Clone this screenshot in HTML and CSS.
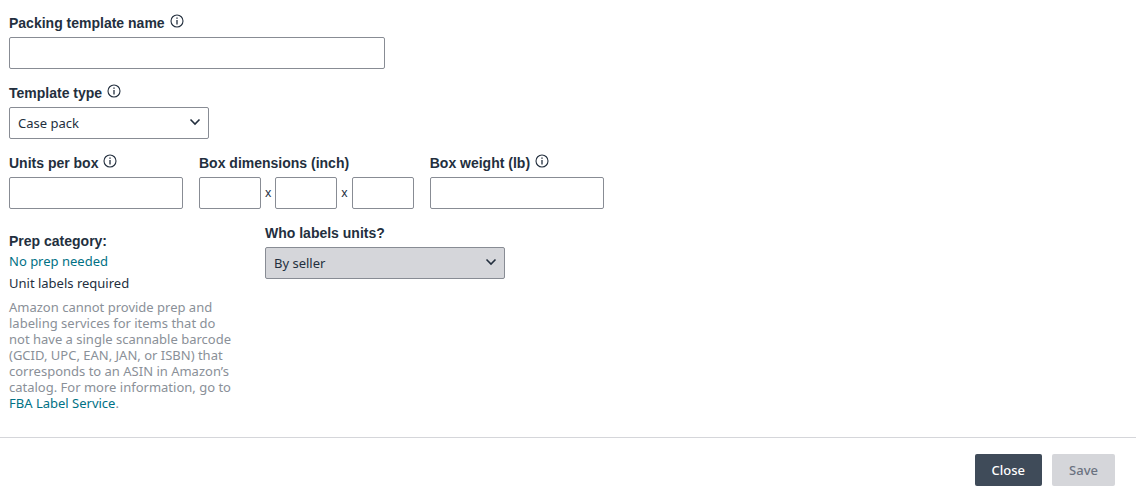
FILE: index.html
```html
<!DOCTYPE html>
<html lang="en">
<head>
  <meta charset="UTF-8">
  <meta name="viewport" content="width=device-width, initial-scale=1.0">
  <title>Packing template</title>
  <link rel="stylesheet" href="styles.css">
</head>
<body>
  <svg class="symbols" aria-hidden="true">
    <symbol id="info" viewBox="0 0 14 14">
      <circle cx="7" cy="7" r="6" fill="none" stroke="currentColor" stroke-width="1.1"/>
      <path d="M7 6v4.5" stroke="currentColor" stroke-width="1.3"/>
      <path d="M7 3.400v1.400" stroke="currentColor" stroke-width="1.4"/>
    </symbol>
    <symbol id="chevron" viewBox="0 0 12 8">
      <path d="M1.500 1.500L6 6l4.500-4.500" fill="none" stroke="currentColor" stroke-width="1.6"/>
    </symbol>
  </svg>

  <form class="template-form">
    <div class="fields">
      <div class="field name-field">
        <div class="label-row">
          <label for="templateName">Packing template name</label>
          <svg class="info"><use href="#info"/></svg>
        </div>
        <input id="templateName" type="text">
      </div>

      <div class="field type-field">
        <div class="label-row">
          <label for="templateType">Template type</label>
          <svg class="info"><use href="#info"/></svg>
        </div>
        <div class="select-box">
          <select id="templateType">
            <option>Case pack</option>
          </select>
          <svg class="chevron"><use href="#chevron"/></svg>
        </div>
      </div>

      <div class="row">
        <div class="field small-field">
          <div class="label-row">
            <label for="unitsPerBox">Units per box</label>
            <svg class="info"><use href="#info"/></svg>
          </div>
          <input id="unitsPerBox" type="text">
        </div>
        <div class="field">
          <div class="label-row">
            <label for="boxLength">Box dimensions (inch)</label>
          </div>
          <div class="dimensions">
            <input id="boxLength" type="text">
            <span class="times">x</span>
            <input type="text" aria-label="Box width">
            <span class="times">x</span>
            <input type="text" aria-label="Box height">
          </div>
        </div>
        <div class="field small-field">
          <div class="label-row">
            <label for="boxWeight">Box weight (lb)</label>
            <svg class="info"><use href="#info"/></svg>
          </div>
          <input id="boxWeight" type="text">
        </div>
      </div>

      <div class="row">
        <div class="prep">
          <h2>Prep category:</h2>
          <a class="prep-link" href="#">No prep needed</a>
          <p class="required">Unit labels required</p>
          <p class="note">Amazon cannot provide prep and labeling services for items that do not have a single scannable barcode (GCID, UPC, EAN, JAN, or ISBN) that corresponds to an ASIN in Amazon’s catalog. For more information, go to <a href="#">FBA Label Service</a>.</p>
        </div>
        <div class="field labels-field">
          <div class="label-row">
            <label for="labelOwner">Who labels units?</label>
          </div>
          <div class="select-box">
            <select id="labelOwner" disabled>
              <option>By seller</option>
            </select>
            <svg class="chevron"><use href="#chevron"/></svg>
          </div>
        </div>
      </div>
    </div>

    <div class="footer">
      <button class="close" type="button">Close</button>
      <button class="save" type="submit" disabled>Save</button>
    </div>
  </form>
</body>
</html>
```
FILE: styles.css
```css
* {
  box-sizing: border-box;
}
body {
  margin: 0;
  background: #fff;
  color: #232f3e;
  font-family: "Noto Sans", sans-serif;
  font-size: 13px;
  line-height: 20px;
}
a {
  color: #007185;
  text-decoration: none;
}
.symbols {
  display: none;
}
.fields {
  display: flex;
  flex-direction: column;
  gap: 14px;
  padding: 13px 9px 26px;
}
.row {
  display: flex;
  align-items: flex-start;
  gap: 16px;
}
.field {
  max-width: 100%;
}
.name-field {
  width: 376px;
}
.type-field {
  width: 200px;
}
.small-field {
  width: 174px;
}
.labels-field,
.prep {
  width: 240px;
}
.label-row {
  display: flex;
  gap: 5px;
  margin-bottom: 4px;
}
label,
h2 {
  margin: 0;
  font-family: "Liberation Sans", Arial, sans-serif;
  font-size: 14px;
  font-weight: bold;
  line-height: 20px;
}
.info {
  width: 14px;
  height: 14px;
  margin-top: 1px;
}
input,
select {
  display: block;
  width: 100%;
  height: 32px;
  padding: 0 8px;
  border: 1px solid #888c94;
  border-radius: 2px;
  background: #fff;
  color: #232f3e;
  font: inherit;
}
select {
  appearance: none;
}
select:disabled {
  background: #d5d6da;
  opacity: 1;
}
.select-box {
  position: relative;
}
.chevron {
  position: absolute;
  top: 11px;
  right: 8px;
  width: 12px;
  height: 8px;
  pointer-events: none;
}
.dimensions {
  display: flex;
  align-items: center;
}
.dimensions input {
  width: 62px;
}
.times {
  padding: 0 4px;
  font-size: 12px;
}
.prep {
  padding-top: 8px;
}
.prep-link {
  display: block;
}
.required {
  margin: 2px 0 6px;
}
.note {
  margin: 0;
  padding-right: 10px;
  color: #8a9098;
  line-height: 16px;
}
.footer {
  display: flex;
  justify-content: flex-end;
  gap: 10px;
  padding: 16px 21px 0;
  border-top: 1px solid #d5d6da;
}
button {
  height: 32px;
  padding: 0 17px;
  border: none;
  border-radius: 2px;
  font: inherit;
  font-weight: 500;
}
.close {
  background: #3f4b59;
  color: #fff;
  cursor: pointer;
}
.save {
  background: #d5d6da;
  color: #6b7280;
}
```
